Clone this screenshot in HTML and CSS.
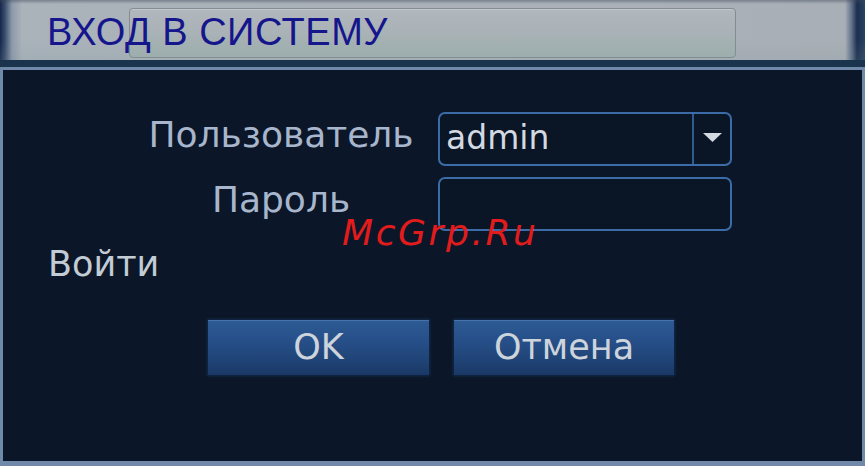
FILE: index.html
```html
<!DOCTYPE html>
<html lang="ru">
<head>
<meta charset="utf-8">
<title>Вход в систему</title>
<link rel="stylesheet" href="styles.css">
</head>
<body>
<div class="screen">
  <header class="header">
    <h1 class="title">ВХОД В СИСТЕМУ</h1>
  </header>
  <main class="panel">
    <div class="form">
      <label class="label">Пользователь</label>
      <div class="field select">
        <span class="value">admin</span>
        <span class="drop">
          <svg width="19" height="9" viewBox="0 0 19 9"><polygon points="0,0 19,0 9.5,9" fill="#d4dae2"/></svg>
        </span>
      </div>
      <label class="label">Пароль</label>
      <div class="field"></div>
    </div>
    <div class="login">Войти</div>
    <div class="buttons">
      <button class="btn btn-ok">OK</button>
      <button class="btn btn-cancel">Отмена</button>
    </div>
  </main>
  <div class="watermark">McGrp.Ru</div>
</div>
</body>
</html>
```
FILE: styles.css
```css
* { box-sizing: border-box; }
html, body { margin: 0; padding: 0; background: #0b1728; }
.screen {
  position: relative;
  width: 865px;
  height: 466px;
  display: flex;
  flex-direction: column;
  background: #7189a9;
  overflow: hidden;
}
.header {
  position: relative;
  height: 67px;
  flex: none;
  border-bottom: 7px solid #1b344d;
  background:
    linear-gradient(to bottom, rgba(60,72,90,0.45) 0, rgba(60,72,90,0) 4px, rgba(255,255,255,0) 40px, rgba(120,150,150,0.15) 60px),
    linear-gradient(to right, #16264a 0, #3a4e6e 5px, #8e9aaa 12px, #aab2ba 22px, #aab1b8 500px, #a9afb6 845px, #5c6c86 852px, #1c2e4e 857px, #2a4464 865px);
  padding: 8px 0 0 47px;
}
.header::before {
  content: "";
  position: absolute;
  left: 129px;
  top: 8px;
  width: 605px;
  height: 48px;
  border: 1px solid #818c94;
  border-radius: 4px;
  box-shadow: inset 0 1px 0 rgba(255,255,255,0.25);
  background: linear-gradient(to bottom, #b1b7bd 0, #a9b2b6 50%, #9caeac 100%);
}
.title {
  position: relative;
  margin: 0;
  font-family: "Liberation Sans", Arial, sans-serif;
  font-weight: normal;
  font-size: 38px;
  line-height: 48px;
  letter-spacing: 0.5px;
  color: #15168c;
}
.panel {
  flex: 1;
  margin: 3px 3px 5px 3px;
  background: #0b1728;
  padding: 42px 0 0 0;
  font-family: "DejaVu Sans", Verdana, sans-serif;
}
.form {
  display: grid;
  grid-template-columns: 302px 294px;
  grid-auto-rows: 54px;
  column-gap: 6px;
  row-gap: 11px;
  margin-left: 127px;
}
.label {
  font-size: 36px;
  line-height: 40px;
  padding-top: 3px;
  text-align: center;
  color: #a7b6cc;
}
.field {
  border: 2px solid #3b6ca8;
  border-radius: 7px;
  background: #0a1526;
  display: flex;
  align-items: stretch;
}
.select .value {
  flex: 1;
  font-size: 33px;
  line-height: 48px;
  padding-left: 6px;
  color: #d3d9e0;
}
.drop {
  width: 38px;
  border-left: 2px solid #2f5b8e;
  display: flex;
  align-items: center;
  justify-content: center;
  padding-bottom: 4px;
}
.login {
  margin: 13px 0 0 45px;
  font-size: 35px;
  line-height: 40px;
  color: #c3cbd4;
}
.buttons {
  display: flex;
  gap: 23px;
  margin: 35px 0 0 204px;
}
.btn {
  height: 57px;
  border: 1px solid #0e2342;
  border-radius: 1px;
  background: linear-gradient(to bottom, #2d5b93 0, #27508a 35%, #1f4375 75%, #1a3865 100%);
  box-shadow: inset 0 1px 0 rgba(120,160,210,0.35), 0 0 2px rgba(40,80,130,0.6);
  color: #cdd4dc;
  font-family: "DejaVu Sans", Verdana, sans-serif;
  font-size: 35px;
  line-height: 50px;
  padding: 0 0 2px 0;
}
.btn-ok { width: 223px; }
.btn-cancel { width: 222px; }
.watermark {
  position: absolute;
  left: 342px;
  top: 215px;
  font-family: "DejaVu Sans", sans-serif;
  font-style: oblique;
  font-size: 36px;
  line-height: 36px;
  letter-spacing: 2.6px;
  color: #e21c1c;
}
```
